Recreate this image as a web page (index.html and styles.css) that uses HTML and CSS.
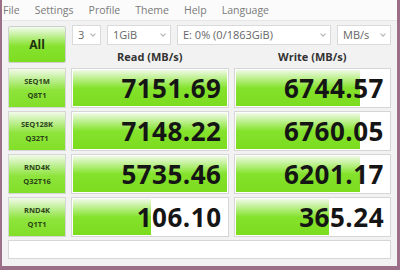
FILE: index.html
```html
<!DOCTYPE html>
<html lang="en">
<head>
    <meta charset="UTF-8">
    <title>CrystalDiskMark</title>
    <link rel="stylesheet" href="styles.css">
</head>
<body>
    <div class="window">
        <div class="menubar">
            <span>File</span>
            <span>Settings</span>
            <span>Profile</span>
            <span>Theme</span>
            <span>Help</span>
            <span>Language</span>
        </div>
        <div class="content">
            <div class="top">
                <button class="all-btn">All</button>
                <div class="top-right">
                    <div class="selects">
                        <div class="select s-count">3<i class="chev"></i></div>
                        <div class="select s-size">1GiB<i class="chev"></i></div>
                        <div class="select s-drive">E: 0% (0/1863GiB)<i class="chev"></i></div>
                        <div class="select s-unit">MB/s<i class="chev"></i></div>
                    </div>
                    <div class="heads">
                        <div class="head">Read (MB/s)</div>
                        <div class="head">Write (MB/s)</div>
                    </div>
                </div>
            </div>

            <div class="row">
                <div class="label">SEQ1M<br>Q8T1</div>
                <div class="result"><div class="fill" style="width: 100%"></div><span>7151.69</span></div>
                <div class="result"><div class="fill" style="width: 80%"></div><span>6744.57</span></div>
            </div>
            <div class="row">
                <div class="label">SEQ128K<br>Q32T1</div>
                <div class="result"><div class="fill" style="width: 100%"></div><span>7148.22</span></div>
                <div class="result"><div class="fill" style="width: 80%"></div><span>6760.05</span></div>
            </div>
            <div class="row">
                <div class="label">RND4K<br>Q32T16</div>
                <div class="result"><div class="fill" style="width: 100%"></div><span>5735.46</span></div>
                <div class="result"><div class="fill" style="width: 80%"></div><span>6201.17</span></div>
            </div>
            <div class="row">
                <div class="label">RND4K<br>Q1T1</div>
                <div class="result"><div class="fill" style="width: 50%"></div><span>106.10</span></div>
                <div class="result"><div class="fill" style="width: 60%"></div><span>365.24</span></div>
            </div>

            <div class="comment"></div>
        </div>
    </div>
</body>
</html>
```

FILE: styles.css
```css
body {
    margin: 0;
    width: 400px;
    height: 270px;
    background: #9c6f88;
    font-family: 'Open Sans', 'Noto Sans', sans-serif;
    box-sizing: border-box;
    padding: 0 3px 4px 2px;
}

.window {
    height: 266px;
    background: #f2f2f2;
    display: flex;
    flex-direction: column;
}

.menubar {
    height: 20px;
    background: #fbfbfb;
    border-bottom: 1px solid #e6e6e6;
    display: flex;
    align-items: center;
    gap: 15px;
    padding-left: 1px;
    font-size: 10.5px;
    color: #7a7a7a;
}

.content {
    padding: 4px 6px 0 6px;
    display: flex;
    flex-direction: column;
    gap: 3px;
}

.top {
    display: flex;
    gap: 5px;
    height: 40px;
}

.all-btn {
    width: 58px;
    height: 37px;
    margin-top: 1px;
    border: 1px solid #cfcfcf;
    border-radius: 2px;
    background: linear-gradient(to bottom, #f4fbee 0%, #b6ee84 30%, #86e22e 55%, #7edd22 100%);
    font-family: inherit;
    font-weight: bold;
    font-size: 12px;
    color: #1e3010;
    padding: 0;
}

.top-right {
    flex: 1;
    display: flex;
    flex-direction: column;
}

.selects {
    display: flex;
    gap: 6px;
    padding-left: 1px;
    height: 20px;
}

.select {
    position: relative;
    box-sizing: border-box;
    height: 20px;
    background: #fff;
    border: 1px solid #dadada;
    font-size: 11px;
    color: #666;
    line-height: 18px;
    padding-left: 5px;
}

.chev {
    position: absolute;
    right: 5px;
    top: 6px;
    width: 3px;
    height: 3px;
    border-right: 1px solid #b0b0b0;
    border-bottom: 1px solid #b0b0b0;
    transform: rotate(45deg);
}

.s-count { width: 29px; }
.s-size { width: 64px; }
.s-drive { width: 154px; }
.s-unit { width: 54px; }

.heads {
    display: flex;
    gap: 5px;
    flex: 1;
    padding-top: 4px;
}

.head {
    flex: 1;
    text-align: center;
    font-weight: bold;
    font-size: 11px;
    color: #333;
    line-height: 16px;
}

.row {
    display: flex;
    gap: 5px;
    height: 40px;
}

.label {
    width: 58px;
    box-sizing: border-box;
    border: 1px solid #d6d6d6;
    background: linear-gradient(to bottom, #f2faea 0%, #b9ee8a 30%, #8ee43c 55%, #82df28 100%);
    font-size: 7.5px;
    font-weight: bold;
    color: #2c4418;
    text-align: center;
    line-height: 14px;
    padding-top: 5px;
}

.result {
    position: relative;
    flex: 1;
    box-sizing: border-box;
    border: 1px solid #d6d6d6;
    background: #fff;
    padding: 1px;
    display: flex;
    align-items: center;
    justify-content: flex-end;
}

.fill {
    position: absolute;
    left: 1px;
    top: 1px;
    bottom: 1px;
    max-width: calc(100% - 2px);
    background: linear-gradient(to bottom, #f0fae6 0%, #b2ee7c 28%, #84e22c 50%, #7cdc1e 100%);
}

.result span {
    position: relative;
    font-size: 26px;
    font-weight: bold;
    color: #151515;
    padding-right: 5px;
    letter-spacing: 0.5px;
}

.comment {
    height: 19px;
    box-sizing: border-box;
    background: #fff;
    border: 1px solid #d6d6d6;
}
```
